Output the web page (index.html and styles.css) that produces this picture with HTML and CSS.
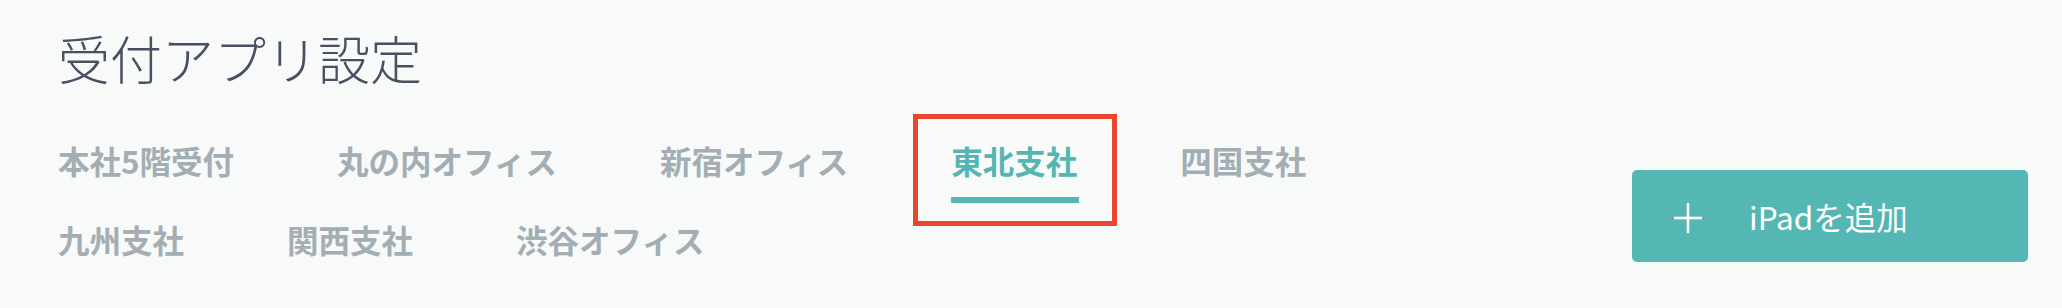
FILE: index.html
```html
<!DOCTYPE html>
<html lang="ja">
<head>
<meta charset="utf-8">
<title>受付アプリ設定</title>
<link rel="stylesheet" href="styles.css">
</head>
<body>
<div class="page">
  <h1 class="title">受付アプリ設定</h1>
  <div class="toolbar">
    <nav class="tabs">
      <a class="tab"><span class="tab-label">本社5階受付</span><span class="tab-bar"></span></a>
      <a class="tab"><span class="tab-label">丸の内オフィス</span><span class="tab-bar"></span></a>
      <a class="tab"><span class="tab-label">新宿オフィス</span><span class="tab-bar"></span></a>
      <a class="tab active"><span class="tab-label">東北支社</span><span class="tab-bar"></span><span class="highlight"></span></a>
      <a class="tab"><span class="tab-label">四国支社</span><span class="tab-bar"></span></a>
      <a class="tab"><span class="tab-label">九州支社</span><span class="tab-bar"></span></a>
      <a class="tab"><span class="tab-label">関西支社</span><span class="tab-bar"></span></a>
      <a class="tab"><span class="tab-label">渋谷オフィス</span><span class="tab-bar"></span></a>
    </nav>
    <button class="add-btn" type="button">
      <svg class="plus" width="28" height="30" viewBox="0 0 28 30" aria-hidden="true">
        <line x1="14" y1="0" x2="14" y2="30" stroke="#fff" stroke-width="2.6"/>
        <line x1="0" y1="15" x2="28" y2="15" stroke="#fff" stroke-width="2.6"/>
      </svg>
      <span class="add-label">iPadを追加</span>
    </button>
  </div>
</div>
</body>
</html>
```

FILE: styles.css
```css
html, body {
  margin: 0;
  padding: 0;
  background: #f8f9f9;
}

body {
  font-family: "Noto Sans CJK JP", "Noto Sans", sans-serif;
  width: 2062px;
  height: 308px;
  overflow: hidden;
}

.page {
  padding: 27px 34px 0 58px;
}

.title {
  margin: 0;
  font-size: 52px;
  line-height: 62px;
  font-weight: 300;
  color: #4a4f61;
  letter-spacing: 0;
}

.toolbar {
  display: flex;
  justify-content: space-between;
  align-items: flex-start;
  margin-top: 51px;
}

.tabs {
  display: flex;
  flex-wrap: wrap;
  flex: 0 1 1400px;
}

.tab {
  position: relative;
  display: flex;
  flex-direction: column;
  align-items: stretch;
  margin-right: 103px;
  height: 79px;
  color: #a2aeb3;
  font-size: 31.5px;
  font-weight: 700;
  line-height: 40px;
  cursor: pointer;
}

.tab-label {
  white-space: nowrap;
}

.tab-bar {
  height: 6px;
  margin-top: 17px;
  margin-right: -2px;
  background: transparent;
}

.tab.active {
  color: #54b6b2;
}

.tab.active .tab-bar {
  background: #54b6b2;
}

.highlight {
  position: absolute;
  left: -38px;
  right: -40px;
  top: -26px;
  bottom: -7px;
  border: 5px solid #e8462d;
  box-sizing: border-box;
  pointer-events: none;
}

.add-btn {
  display: flex;
  align-items: center;
  width: 396px;
  height: 92px;
  margin-top: 30px;
  padding: 0 0 0 42px;
  border: none;
  border-radius: 5px;
  background: #55b7b4;
  color: #fff;
  font-family: "Noto Sans CJK JP", "Noto Sans", sans-serif;
  font-size: 31.5px;
  font-weight: 400;
  cursor: pointer;
  box-sizing: border-box;
}

.plus {
  flex: 0 0 auto;
  margin-right: 47px;
  margin-top: 4px;
}

.add-label {
  line-height: 40px;
}
```
